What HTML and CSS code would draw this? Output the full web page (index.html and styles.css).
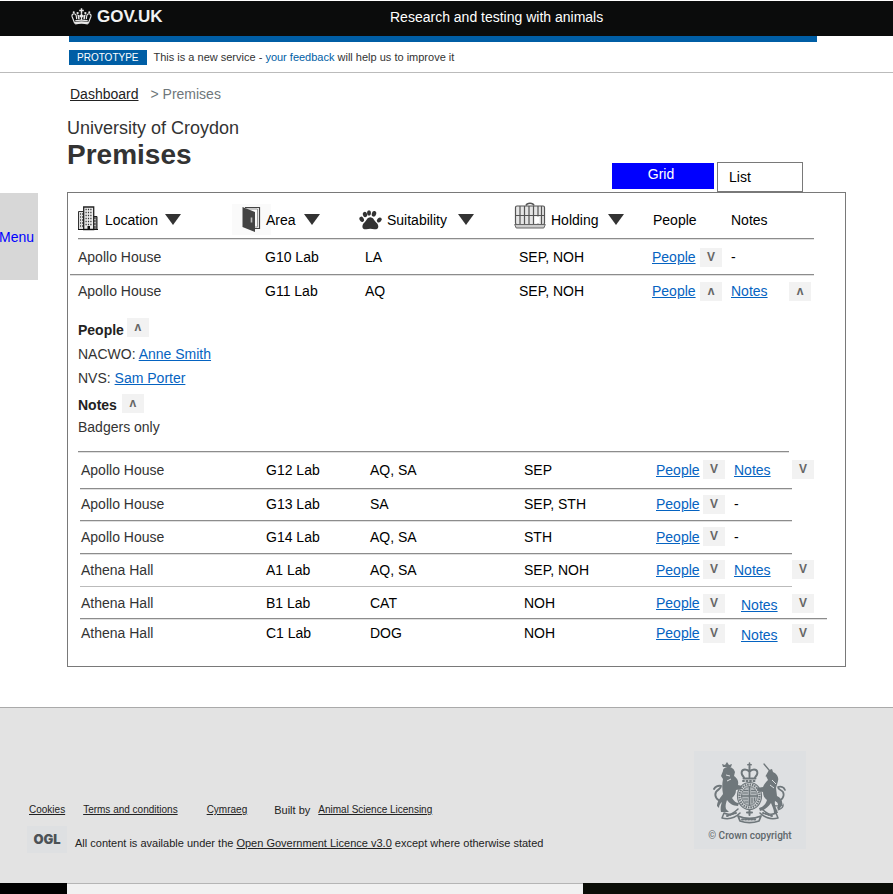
FILE: index.html
```html
<!DOCTYPE html>
<html lang="en">
<head>
<meta charset="utf-8">
<title>Premises</title>
<meta name="viewport" content="width=device-width, initial-scale=1">
<link rel="stylesheet" href="styles.css">
</head>
<body>
<svg class="sprite" aria-hidden="true">
  <symbol id="tri" viewBox="0 0 16 11"><path d="M0 0h16L8 11z" fill="#333"/></symbol>
</svg>

<header class="top">
  <a class="brand" href="#">
    <svg class="crown" viewBox="0 0 20 16" aria-hidden="true">
      <g fill="none" stroke="#e8e8e8" stroke-width="1.1">
        <path d="M3.600 14.600 1.100 8.200C.4 6 2.200 5 3.800 5.600 5.800 6.300 5 9 5.400 10.600M16.400 14.600l2.500-6.400c.7-2.200-1.100-3.200-2.700-2.600-2 .7-1.200 3.400-1.600 5"/>
        <path d="M7.600 10.500 6.700 6.800 8.500 7.700M12.400 10.500l.9-3.700-1.800.9M10 5v6.500"/>
        <path d="M4 12.200c4-1 8-1 12 0"/>
      </g>
      <g fill="#e8e8e8">
        <path d="M3.600 13.200c4.200-.9 8.600-.9 12.800 0l-.5 2.300c-3.900-.7-7.900-.7-11.800 0z"/>
        <path d="M9.300.2h1.400v1.400h1.500V3h-1.500v2.200H9.300V3H7.800V1.600h1.500z"/>
        <circle cx="2.600" cy="4" r="1"/><circle cx="17.400" cy="4" r="1"/>
        <circle cx="6.300" cy="4.700" r="1.100"/><circle cx="13.700" cy="4.700" r="1.100"/>
        <circle cx="10" cy="7.500" r="1.600"/><circle cx="7.300" cy="9.300" r=".9"/><circle cx="12.700" cy="9.300" r=".9"/>
      </g>
    </svg>
    <span>GOV.UK</span>
  </a>
  <span class="service">Research and testing with animals</span>
</header>
<div class="bar"></div>
<div class="phase">
  <strong class="tag">PROTOTYPE</strong>
  <span>This is a new service - <a href="#">your feedback</a> will help us to improve it</span>
</div>

<div class="page">
  <nav class="side"><a href="#">Menu</a></nav>
  <main>
    <nav class="crumbs" aria-label="Breadcrumb"><a href="#">Dashboard</a><span>&gt; Premises</span></nav>
    <div class="head">
      <div>
        <p class="org">University of Croydon</p>
        <h1>Premises</h1>
      </div>
      <div class="tabs">
        <button class="tab on" type="button">Grid</button>
        <button class="tab" type="button">List</button>
      </div>
    </div>

    <div class="panel">
      <table>
        <thead>
          <tr>
            <th scope="col"><button class="sort location" type="button">
              <svg width="20" height="24" viewBox="0 0 20 24" aria-hidden="true">
                <path d="M.5 5.500h5v18h-5z" fill="#ddd" stroke="#333"/>
                <path d="M15 10.500h4v13h-4z" fill="#777" stroke="#222"/>
                <path d="M5.700 1h10v22.500h-10z" fill="#eee" stroke="#222" stroke-width="1.300"/>
                <path d="M7.500 3.500h7M7.500 6.500h7M7.500 9.500h7M7.500 12.500h7M7.500 15.500h7M7.500 18.500h7" stroke="#333" stroke-width="1.600" stroke-dasharray="1.200 1.200"/>
                <path d="M2 8h3M2 11h3M2 14h3M2 17h3M2 20h3" stroke="#444" stroke-width="1.500" stroke-dasharray="1 1"/>
                <path d="M17 13v9" stroke="#eee" stroke-dasharray="1 2"/>
                <path d="M9.500 20h2.500v4H9.500zM0 23h20v1H0z" fill="#111"/>
              </svg>
              <span>Location</span><svg class="tri" aria-hidden="true"><use href="#tri"/></svg></button></th>
            <th scope="col"><button class="sort area" type="button">
              <svg class="door" width="33" height="31" viewBox="0 0 33 31" aria-hidden="true">
                <path d="M0 0h39v31H0z" fill="#fafafa"/>
                <path d="M13 3.500h14.500v21H23" fill="none" stroke="#444" stroke-width="1.200"/>
                <path d="M14 5h11.500v18H23" fill="none" stroke="#999"/>
                <path d="M10.500 3 23 8v20l-12.500-5z" fill="#444"/>
                <path d="M19.500 13.500v5" stroke="#bbb" stroke-width="1.600"/>
              </svg>
              <span>Area</span><svg class="tri" aria-hidden="true"><use href="#tri"/></svg></button></th>
            <th scope="col"><button class="sort suit" type="button">
              <svg width="23" height="20" viewBox="0 0 23 20" aria-hidden="true">
                <g fill="#333">
                  <ellipse cx="2.700" cy="9.300" rx="2.100" ry="2.800" transform="rotate(-30 2.700 9.300)"/>
                  <ellipse cx="6" cy="4.500" rx="2.100" ry="2.700" transform="rotate(-18 6 4.500)"/>
                  <ellipse cx="10" cy="3" rx="2" ry="2.700"/>
                  <ellipse cx="15" cy="3.800" rx="2.200" ry="2.900" transform="rotate(15 15 3.800)"/>
                  <ellipse cx="20.300" cy="10" rx="2" ry="2.800" transform="rotate(45 20.300 10)"/>
                  <path d="M11.300 7.300c2.600 0 3.500 2.300 4.800 4 1.300 1.600 3.300 2.900 3.200 5.400-.1 2.300-2.300 2.900-4 2.500-2.700-.7-5.300-.7-8 0-1.700.4-3.800-.2-3.900-2.500-.1-2.500 1.800-3.800 3.100-5.400 1.300-1.700 2.200-4 4.800-4z"/>
                </g>
              </svg>
              <span>Suitability</span><svg class="tri" aria-hidden="true"><use href="#tri"/></svg></button></th>
            <th scope="col"><button class="sort hold" type="button">
              <svg width="32" height="27" viewBox="0 0 32 27" aria-hidden="true">
                <path d="M12 3.500C13 .5 19 .5 20 3.500" fill="none" stroke="#555" stroke-width="1.500"/>
                <rect x="1.500" y="4" width="29" height="18.500" rx="1.500" fill="#e6e6e6" stroke="#555" stroke-width="1.200"/>
                <path d="M6 4v18M10.500 4v18M15 4v18M19.500 4v18M24 4v18M27.500 4v18M2 13.500h28" stroke="#555" stroke-width="1.200"/>
                <path d="M20.500 14.500h5v7h-5z" fill="#fff"/>
                <path d="M.7 22.500h30.600l-1.500 3.500H2.200z" fill="#ccc" stroke="#666"/>
              </svg>
              <span>Holding</span><svg class="tri" aria-hidden="true"><use href="#tri"/></svg></button></th>
            <th scope="col">People</th>
            <th scope="col">Notes</th>
            <th></th>
          </tr>
        </thead>
        <tbody class="upper">
          <tr class="wide"><td>Apollo House</td><td>G10 Lab</td><td>LA</td><td>SEP, NOH</td><td class="people"><a href="#">People</a><button class="tog" type="button" aria-label="Show people">V</button></td><td>-</td><td></td></tr>
          <tr class="open"><td>Apollo House</td><td>G11 Lab</td><td>AQ</td><td>SEP, NOH</td><td class="people"><a href="#">People</a><button class="tog" type="button" aria-label="Hide people">ʌ</button></td><td><a href="#">Notes</a></td><td><button class="tog" type="button" aria-label="Hide notes">ʌ</button></td></tr>
          <tr class="detail"><td colspan="7">
            <h2>People <button class="tog" type="button" aria-label="Hide people">ʌ</button></h2>
            <p>NACWO: <a href="#">Anne Smith</a></p>
            <p>NVS: <a href="#">Sam Porter</a></p>
            <h2 class="notes">Notes <button class="tog" type="button" aria-label="Hide notes">ʌ</button></h2>
            <p class="note">Badgers only</p>
          </td></tr>
        </tbody>
        <tbody class="lower">
          <tr class="tall"><td>Apollo House</td><td>G12 Lab</td><td>AQ, SA</td><td>SEP</td><td class="people"><a href="#">People</a><button class="tog" type="button" aria-label="Show people">V</button></td><td><a href="#">Notes</a></td><td><button class="tog" type="button" aria-label="Show notes">V</button></td></tr>
          <tr><td>Apollo House</td><td>G13 Lab</td><td>SA</td><td>SEP, STH</td><td class="people"><a href="#">People</a><button class="tog" type="button" aria-label="Show people">V</button></td><td>-</td><td></td></tr>
          <tr class="mid"><td>Apollo House</td><td>G14 Lab</td><td>AQ, SA</td><td>STH</td><td class="people"><a href="#">People</a><button class="tog" type="button" aria-label="Show people">V</button></td><td>-</td><td></td></tr>
          <tr class="mid faint"><td>Athena Hall</td><td>A1 Lab</td><td>AQ, SA</td><td>SEP, NOH</td><td class="people"><a href="#">People</a><button class="tog" type="button" aria-label="Show people">V</button></td><td><a href="#">Notes</a></td><td><button class="tog" type="button" aria-label="Show notes">V</button></td></tr>
          <tr class="long"><td>Athena Hall</td><td>B1 Lab</td><td>CAT</td><td>NOH</td><td class="people"><a href="#">People</a><button class="tog" type="button" aria-label="Show people">V</button></td><td class="inset"><a href="#">Notes</a></td><td><button class="tog" type="button" aria-label="Show notes">V</button></td></tr>
          <tr class="last"><td>Athena Hall</td><td>C1 Lab</td><td>DOG</td><td>NOH</td><td class="people"><a href="#">People</a><button class="tog" type="button" aria-label="Show people">V</button></td><td class="inset"><a href="#">Notes</a></td><td><button class="tog" type="button" aria-label="Show notes">V</button></td></tr>
        </tbody>
      </table>
    </div>
  </main>
</div>

<footer>
  <div class="legal">
    <div class="links">
      <a href="#">Cookies</a>
      <a class="terms" href="#">Terms and conditions</a>
      <a class="lang" href="#">Cymraeg</a>
      <span class="built">Built by</span>
      <a class="asl" href="#">Animal Science Licensing</a>
    </div>
    <div class="licence">
      <span class="ogl">OGL</span>
      <span>All content is available under the <a href="#">Open Government Licence v3.0</a> except where otherwise stated</span>
    </div>
  </div>
  <div class="crest">
    <svg viewBox="0 0 76 62" aria-hidden="true">
      <g fill="none" stroke="#6f777b" stroke-linecap="round" stroke-linejoin="round">
        <!-- crown -->
        <path d="M32 15.500c-4-4-2.500-8 1-8 2 0 3.500 1 4.500 2.500C38.500 8.500 40 7.500 42 7.500c3.500 0 5 4 1 8M37.500 5v10M31.500 16.500h12" stroke-width="1.900"/>
        <path d="M37.500 1v4M35.800 2.700h3.400" stroke-width="1.600"/>
        <path d="M31 19h13" stroke-width="2" stroke-dasharray="1 2.500"/>
        <!-- shield and garter -->
        <ellipse cx="37.500" cy="34" rx="12" ry="13.500" stroke-width="1.200"/>
        <ellipse cx="37.500" cy="34" rx="10" ry="11.500" stroke-width="2.200" stroke-linecap="butt" stroke-dasharray="1.600 .8"/>
        <ellipse cx="37.500" cy="34" rx="8" ry="9.500" fill="#b3b8bb" stroke-width="1"/>
        <path d="M37.500 25v18M30 34h15" stroke-width="1.400"/>
        <path d="M32 28.500h4M31.500 31h4M39.500 28.500h4M39.500 31h4M31.500 37h4M33 40h3M40 36v5M42.500 36v3" stroke-width="1.100"/>
        <!-- tails -->
        <path d="M10 39c-5 0-8-5-6-9 2-3 5-3 5-6-3-1-6 1-7 3" stroke-width="1.900"/>
        <path d="M65 39c5 0 8-5 6-9-2-3-5-2-5-5 3-1 6 0 7 3" stroke-width="1.700"/>
        <!-- horn and chain -->
        <path d="M57 8 52 2" stroke-width="1.300"/>
        <path d="M60 40c2 7 7 2 11 4M66 48c3-1 6-3 5-6" stroke-width="1.100"/>
        <!-- scrolls -->
        <path d="M12 51c6 3 10 0 14-4M10 56c8 2 14-1 18-5M12 51l-2 5M64 51c-6 3-10 0-14-4M66 56c-8 2-14-1-18-5M64 51l2 5" stroke-width="1.500"/>
        <path d="M26 54c7 3 16 3 23 0l-2 5c-6 2-13 2-19 0z" stroke-width="1.800"/>
        <path d="M30 57.500h15M15 54l9-3M60 54l-9-3" stroke-width="1.900" stroke-dasharray="1.200 1.800"/>
        <path d="M37.500 48v5M35 50.500h5" stroke-width="2"/>
      </g>
      <g fill="#6f777b">
        <!-- lion -->
        <path d="M11 9c0-3 3-4 5-4 4 0 6 2 7 5l-1 4c3 2 5 5 4 9l4 1-1 3-5 1c0 4-2 6-4 8 2 3 4 5 7 5l-1 3c-5 0-9-3-11-6-1 3-2 6-1 9l3 3H9c-1-4 0-7 1-10-2 2-3 3-3 6l-2-2c0-5 4-9 6-12-1-5-1-10 0-15l-2-3z"/>
        <path d="m11 5-1-3 3 1 2-3 2 3 3-1-1 3z"/>
        <!-- unicorn -->
        <path d="m53 15 4-7 3-1 1 3c4 2 6 5 5 9l-2 7 1 8c4 2 6 5 5 9l-3 5-2-2c2-3 1-6-2-7-1 5 2 8 3 12h-4c0-4-2-7-3-10-3 4-6 7-11 8l-1-3c4-1 7-4 8-8-3-2-4-5-4-8l-5-1-1-3 6-1c1-3 3-5 5-7l-2-4z"/>
      </g>
      <path d="m60 18 4 4M58 23l4 3M14 13l4 1M19 17l-4 2" fill="none" stroke="#dee0e2" stroke-width="1"/>
    </svg>
    <span>© Crown copyright</span>
  </div>
</footer>
<div class="strip"><i></i><b></b><i class="fade"></i></div>
</body>
</html>
```
FILE: styles.css
```css
* { box-sizing: border-box; }
body {
  margin: 0;
  padding-top: 1px;
  background: #fff;
  color: #333;
  font: 14px/20px "Liberation Sans", Arial, sans-serif;
}
h1, h2, p { margin: 0; }
button { font: inherit; color: inherit; padding: 0; border: 0; background: none; cursor: pointer; }
.sprite { display: none; }

.top {
  display: grid;
  grid-template-columns: 319fr 503fr;
  align-items: center;
  height: 35px;
  padding: 0 0 4px 71px;
  background: #0b0c0c;
  color: #fff;
}
.brand {
  display: flex;
  align-items: center;
  gap: 5px;
  color: #f2f2f2;
  font-size: 17px;
  font-weight: bold;
  text-decoration: none;
}
.crown { width: 21px; height: 17px; }
.bar { height: 6px; margin: 0 76px 0 69px; background: #005ea5; }
.phase {
  display: flex;
  align-items: center;
  gap: 7px;
  height: 31px;
  padding-left: 69px;
  border-bottom: 1px solid #bbb;
  font-size: 11px;
}
.phase a { color: #005ea5; text-decoration: none; }
.tag {
  padding: 0 8px;
  background: #005ea5;
  color: #fff;
  font-size: 10px;
  font-weight: normal;
  line-height: 15px;
}

.page { display: flex; align-items: flex-start; }
.side {
  display: flex;
  align-items: center;
  flex: none;
  width: 38px;
  height: 87px;
  margin: 120px 29px 0 0;
  background: #d7d7d7;
}
.side a { margin-left: -1px; color: #00f; text-decoration: none; }
main { flex: 1; min-width: 0; margin: 11px 47px 40px 0; }
.crumbs { display: flex; gap: 12px; padding-left: 3px; color: #6f777b; }
.crumbs a { color: #222; }
.head {
  display: flex;
  align-items: flex-end;
  justify-content: space-between;
  height: 88px;
  padding-right: 43px;
}
.head > div:first-child { align-self: flex-start; padding-top: 13px; }
.org { font-size: 18px; line-height: 22px; }
h1 { font-size: 28px; line-height: 32px; }
.tabs { display: flex; gap: 3px; }
.tab {
  width: 86px;
  height: 30px;
  padding-left: 11px;
  border: 1px solid #797979;
  background: #fff;
  color: #000;
  text-align: left;
}
.tab.on {
  width: 102px;
  height: 26px;
  margin-top: 1px;
  padding: 0 4px 4px 0;
  border: 0;
  background: #00f;
  color: #fff;
  text-align: center;
}

.panel { padding-bottom: 19px; border: 1px solid #797979; }
table, thead, tbody { display: block; }
tr {
  --from: 12px;
  --to: 53px;
  position: relative;
  display: grid;
  align-items: center;
  height: 32px;
}
tr::after {
  content: "";
  position: absolute;
  left: var(--from);
  right: var(--to);
  bottom: 0;
  height: 1px;
  background: #8c8c8c;
  box-shadow: 0 1px #e0e0e0;
}
th, td { padding: 0; font-weight: normal; text-align: left; white-space: nowrap; color: #000; }
td:first-child { color: #333; }
thead tr {
  --from: 10px;
  --to: 31px;
  grid-template-columns: 154fr 127fr 155fr 139fr 78fr 58fr 23fr;
  height: 46px;
  padding: 7px 33px 0 10px;
}
.upper tr {
  --from: 10px;
  --to: 56px;
  grid-template-columns: 187fr 100fr 154fr 133fr 79fr 58fr 23fr;
  padding: 0 33px 0 10px;
}
.upper .wide { --from: 2px; --to: 31px; height: 36px; }
.lower tr {
  grid-template-columns: 185fr 104fr 154fr 132fr 78fr 58fr 23fr;
  padding: 0 30px 2px 13px;
}
.lower .tall { height: 37px; }
.lower .mid { height: 33px; }
.lower .faint::after { background: #bbb; box-shadow: none; }
.lower .long { --to: 18px; padding-bottom: 0; }
.lower .last { height: 28px; padding-bottom: 0; }
.open::after, .last::after { display: none; }
.upper .detail { display: block; height: auto; padding: 11px 10px 14px; }
.detail td { display: block; line-height: 24px; }
td a { color: #0563c1; }
.people { display: flex; align-items: center; justify-content: space-between; padding-right: 9px; }
.inset { padding: 4px 0 0 7px; }

.sort { display: flex; align-items: center; height: 32px; color: #000; }
.sort svg { flex: none; overflow: visible; }
.tri { width: 16px; height: 11px; }
.location { gap: 7px; }
.door { margin-right: -7px; }
.area { gap: 8px; }
.suit span { padding: 0 11px 0 5px; }
.hold span { padding: 0 10px 0 5px; }
.hold svg:first-child { margin-bottom: 8px; }
.location svg:first-child { margin-bottom: 4px; }
.sort span { position: relative; }

.tog {
  width: 22px;
  height: 19px;
  background: #f2f2f2;
  color: #666;
  font-size: 12px;
  font-weight: bold;
  line-height: 19px;
  text-align: center;
}
td > .tog { display: block; }
h2 { display: flex; gap: 3px; font-size: 14px; line-height: 24px; color: #222; }
.notes { gap: 5px; margin-top: 4px; line-height: 22px; }
.note { line-height: 22px; }

footer {
  display: flex;
  justify-content: space-between;
  height: 176px;
  padding: 43px 87px 0 27px;
  border-top: 1px solid #aaa;
  background: #e3e3e3;
  color: #222;
  font-size: 11px;
}
footer a { color: #222; }
.legal { padding-top: 49px; }
.links { display: flex; align-items: center; height: 20px; padding-left: 2px; }
.links a { font-size: 10px; }
.terms { margin-left: 18px; }
.lang { margin-left: 29px; }
.built { margin-left: 27px; }
.asl { margin-left: 8px; }
.licence { display: flex; align-items: center; gap: 8px; margin-top: 5px; }
.ogl {
  width: 40px;
  background: #dee0e2;
  color: #4c5256;
  font: 900 13px/27px Inter, "Liberation Sans", sans-serif;
  text-align: center;
}
.licence span + span { padding-top: 8px; }
.crest {
  display: flex;
  flex-direction: column;
  align-items: center;
  width: 112px;
  height: 98px;
  padding-top: 11px;
  background: #dee0e2;
  color: #5f676b;
  font: 500 10px/16px Roboto, sans-serif;
}
.crest svg { width: 76px; height: 62px; margin-bottom: 4px; }

.strip { display: grid; grid-template-columns: 67fr 516fr 310fr; height: 11px; }
.strip i { background: #000; }
.strip b { border-top: 1px solid #b5b5b5; background: #f1f1f1; }
.strip .fade { background: #0a0d07; }
```
